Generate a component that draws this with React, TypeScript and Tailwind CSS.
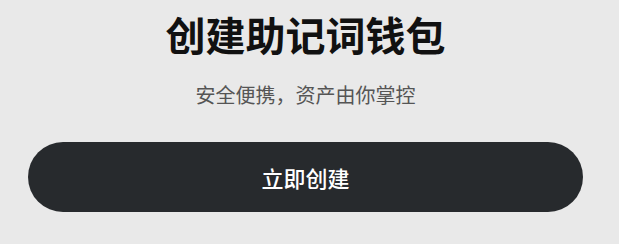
import React from "react";

const App: React.FC = () => {
  return (
    <div
      className="w-[619px] h-[244px] bg-[#e9e9e9] flex flex-col items-center pr-2"
      style={{ fontFamily: '"Noto Sans CJK SC", "Noto Sans", sans-serif' }}
    >
      <h1 className="text-[40px] leading-[68px] font-bold text-[#111111]">
        创建助记词钱包
      </h1>
      <p className="text-[20px] leading-[54px] text-[#555555]">
        安全便携，资产由你掌控
      </p>
      <button className="mt-[20px] w-[555px] h-[70px] rounded-full bg-[#272a2d] text-white text-[22px] font-medium">
        立即创建
      </button>
    </div>
  );
};

export default App;
